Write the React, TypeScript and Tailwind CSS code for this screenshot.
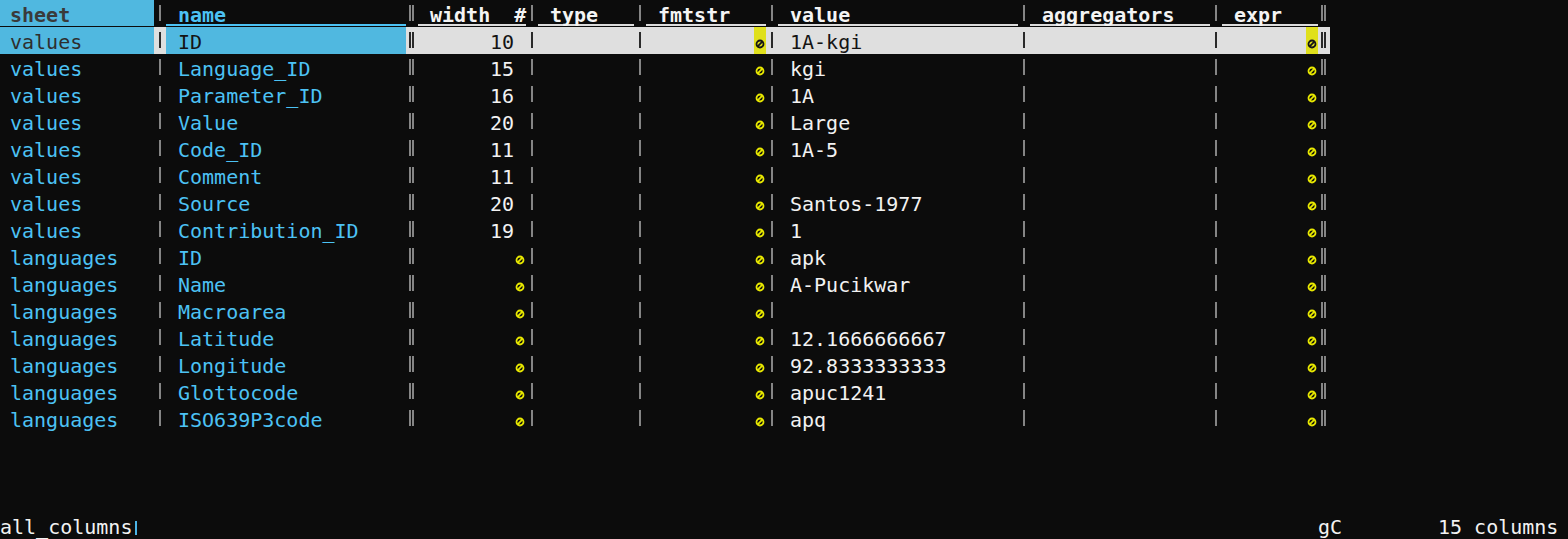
import React from 'react';

type Row = { sheet: string; name: string; width: string | null; value: string };

const rows: Row[] = [
  { sheet: 'values', name: 'ID', width: '10', value: '1A-kgi' },
  { sheet: 'values', name: 'Language_ID', width: '15', value: 'kgi' },
  { sheet: 'values', name: 'Parameter_ID', width: '16', value: '1A' },
  { sheet: 'values', name: 'Value', width: '20', value: 'Large' },
  { sheet: 'values', name: 'Code_ID', width: '11', value: '1A-5' },
  { sheet: 'values', name: 'Comment', width: '11', value: '' },
  { sheet: 'values', name: 'Source', width: '20', value: 'Santos-1977' },
  { sheet: 'values', name: 'Contribution_ID', width: '19', value: '1' },
  { sheet: 'languages', name: 'ID', width: null, value: 'apk' },
  { sheet: 'languages', name: 'Name', width: null, value: 'A-Pucikwar' },
  { sheet: 'languages', name: 'Macroarea', width: null, value: '' },
  { sheet: 'languages', name: 'Latitude', width: null, value: '12.1666666667' },
  { sheet: 'languages', name: 'Longitude', width: null, value: '92.8333333333' },
  { sheet: 'languages', name: 'Glottocode', width: null, value: 'apuc1241' },
  { sheet: 'languages', name: 'ISO639P3code', width: null, value: 'apq' },
];

function Sep({ dbl, hl }: { dbl?: boolean; hl?: boolean }) {
  const bar = hl ? 'bg-[#2a2a2a]' : 'bg-[#858585]';
  return (
    <div
      className={`w-[12px] h-[27px] shrink-0 flex items-start pt-[5px] ${dbl ? 'pl-[3px] gap-[1px]' : 'pl-[5px]'} ${hl ? 'bg-[#dfdfdf]' : ''}`}
    >
      <div className={`w-[2px] h-[16px] ${bar}`} />
      {dbl && <div className={`w-[2px] h-[16px] ${bar}`} />}
    </div>
  );
}

function Null({ hl }: { hl?: boolean }) {
  const c = hl ? '#151515' : '#e8e800';
  return (
    <div className={`w-[12px] h-[27px] shrink-0 flex justify-center pt-[12px] ${hl ? 'bg-[#e0e01c]' : ''}`}>
      <svg width="10" height="10" viewBox="0 0 10 10">
        <circle cx="5" cy="5" r="3.5" fill="none" stroke={c} strokeWidth="1.8" />
        <line x1="2.2" y1="7.8" x2="7.8" y2="2.2" stroke={c} strokeWidth="1.8" />
      </svg>
    </div>
  );
}

function HeaderCell({ w, text, cls }: { w: string; text: string; cls: string }) {
  return (
    <div className={`${w} h-[27px] shrink-0`}>
      <div className={`h-[26px] pl-[12px] border-b-2 font-bold whitespace-pre ${cls}`}>{text}</div>
    </div>
  );
}

function Header() {
  const norm = 'text-[#f4f4f4] border-[#dcdcdc]';
  return (
    <div className="flex h-[27px]">
      <HeaderCell w="w-[156px]" text="sheet" cls="bg-[#50b8e0] text-[#3a3a3a] border-[#50b8e0]" />
      <Sep />
      <HeaderCell w="w-[240px]" text="name" cls="text-[#4cc2f4] border-[#4cc2f4]" />
      <Sep dbl />
      <HeaderCell w="w-[108px]" text="width  #" cls={norm} />
      <Sep />
      <HeaderCell w="w-[96px]" text="type" cls={norm} />
      <Sep />
      <HeaderCell w="w-[120px]" text="fmtstr" cls={norm} />
      <Sep />
      <HeaderCell w="w-[240px]" text="value" cls={norm} />
      <Sep />
      <HeaderCell w="w-[180px]" text="aggregators" cls={norm} />
      <Sep />
      <HeaderCell w="w-[96px]" text="expr" cls={norm} />
      <Sep dbl />
    </div>
  );
}

function DataRow({ r, hl }: { r: Row; hl?: boolean }) {
  const rest = hl ? 'bg-[#dfdfdf] text-[#141414]' : 'text-[#f2f2f2]';
  return (
    <div className="flex h-[27px]">
      <div
        className={`w-[156px] h-[27px] shrink-0 pl-[12px] whitespace-pre overflow-hidden ${hl ? 'bg-[#50b8e0] text-[#2e2e2e]' : 'text-[#4cc2f4]'}`}
      >
        {r.sheet}
      </div>
      <Sep hl={hl} />
      <div
        className={`w-[240px] h-[27px] shrink-0 pl-[12px] whitespace-pre overflow-hidden ${hl ? 'bg-[#50b8e0] text-[#141414]' : 'text-[#4cc2f4]'}`}
      >
        {r.name}
      </div>
      <Sep dbl hl={hl} />
      <div className={`w-[108px] h-[27px] shrink-0 flex ${rest}`}>
        <div className="w-[96px] text-right whitespace-pre">{r.width ?? ''}</div>
        {r.width === null ? <Null hl={hl} /> : <div className="w-[12px]" />}
      </div>
      <Sep hl={hl} />
      <div className={`w-[96px] h-[27px] shrink-0 ${rest}`} />
      <Sep hl={hl} />
      <div className={`w-[120px] h-[27px] shrink-0 flex ${rest}`}>
        <div className="w-[108px]" />
        <Null hl={hl} />
      </div>
      <Sep hl={hl} />
      <div className={`w-[240px] h-[27px] shrink-0 pl-[12px] whitespace-pre overflow-hidden ${rest}`}>{r.value}</div>
      <Sep hl={hl} />
      <div className={`w-[180px] h-[27px] shrink-0 ${rest}`} />
      <Sep hl={hl} />
      <div className={`w-[96px] h-[27px] shrink-0 flex ${rest}`}>
        <div className="w-[84px]" />
        <Null hl={hl} />
      </div>
      <Sep dbl hl={hl} />
    </div>
  );
}

function StatusBar() {
  return (
    <div className="flex h-[27px] text-[#f2f2f2] leading-[28px]">
      <div className="w-[132px] shrink-0 pl-[2px] whitespace-pre">all_columns</div>
      <div className="w-[12px] h-[27px] shrink-0 pl-[5px] pt-[8px]">
        <div className="w-[2px] h-[14px] bg-[#4cb4e6]" />
      </div>
      <div className="w-[1176px] shrink-0" />
      <div className="w-[120px] shrink-0 whitespace-pre">gC</div>
      <div className="w-[120px] shrink-0 whitespace-pre">15 columns</div>
    </div>
  );
}

export default function App() {
  return (
    <div className="w-[1568px] h-[539px] overflow-hidden bg-[#0c0c0c]">
      <div
        className="ml-[-2px] h-[540px] flex flex-col font-['DejaVu_Sans_Mono','Liberation_Mono',monospace] text-[20px] leading-[31px]"
      >
        <Header />
        {rows.map((r, i) => (
          <DataRow key={i} r={r} hl={i === 0} />
        ))}
        <div className="flex-1" />
        <StatusBar />
      </div>
    </div>
  );
}
